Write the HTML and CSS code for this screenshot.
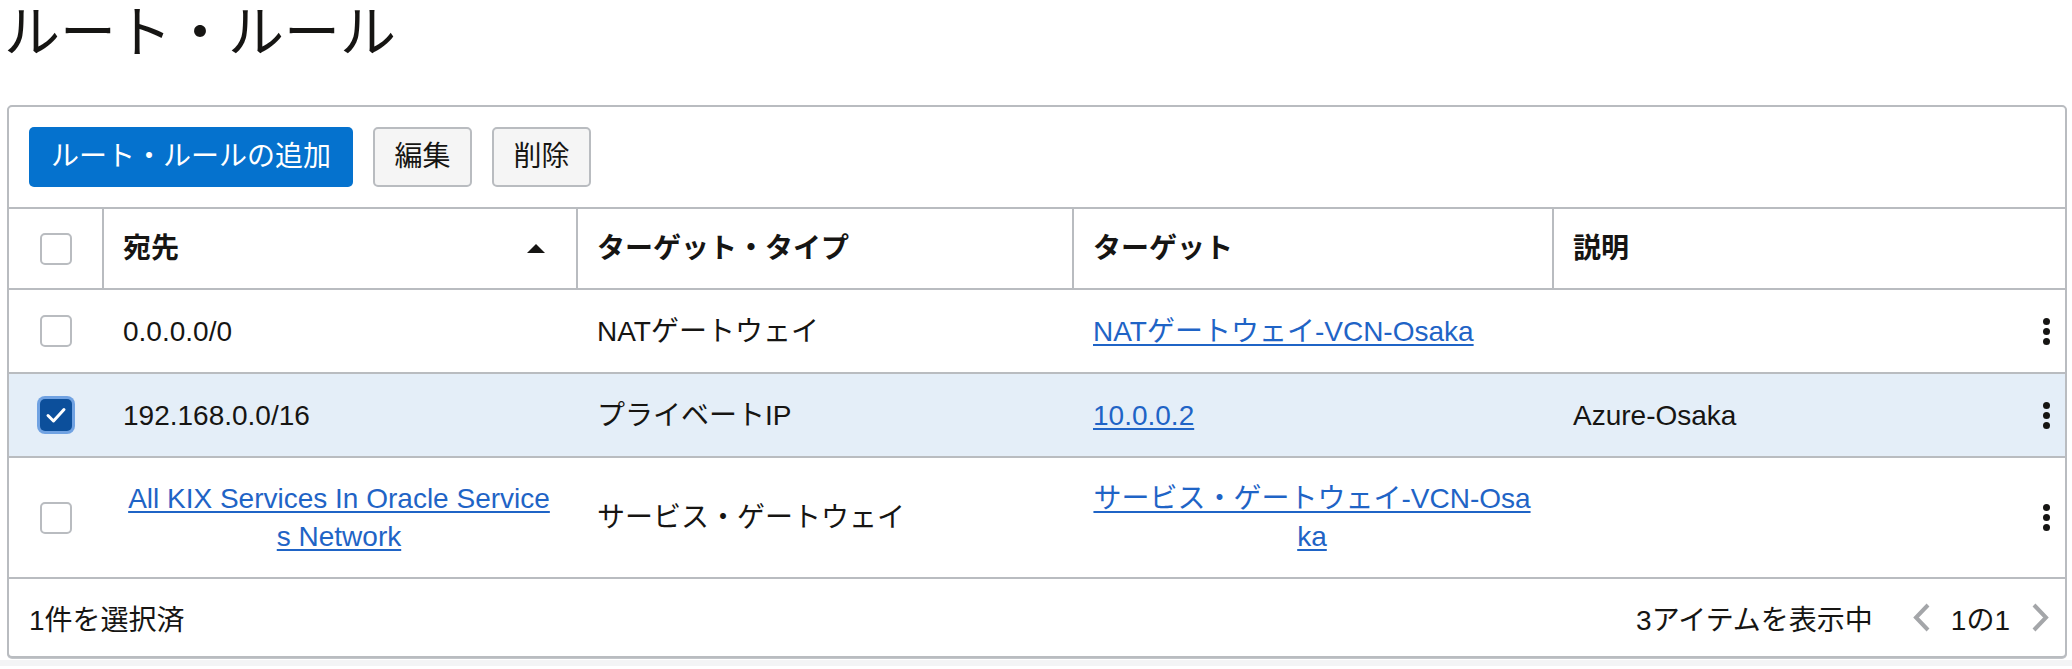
FILE: index.html
```html
<!DOCTYPE html>
<html lang="ja">
<head>
<meta charset="utf-8">
<title>ルート・ルール</title>
<link rel="stylesheet" href="styles.css">
</head>
<body>
<div class="page">
  <h1 class="title">ルート・ルール</h1>
  <section class="panel">
    <div class="toolbar">
      <button class="btn btn-primary">ルート・ルールの追加</button>
      <button class="btn btn-secondary">編集</button>
      <button class="btn btn-secondary">削除</button>
    </div>
    <div class="grid head">
      <div class="cell cell-check"><span class="checkbox"></span></div>
      <div class="cell hcell sortable"><span>宛先</span><span class="sort-up"></span></div>
      <div class="cell hcell">ターゲット・タイプ</div>
      <div class="cell hcell">ターゲット</div>
      <div class="cell hcell span2">説明</div>
    </div>
    <div class="grid row">
      <div class="cell cell-check"><span class="checkbox"></span></div>
      <div class="cell">0.0.0.0/0</div>
      <div class="cell">NATゲートウェイ</div>
      <div class="cell"><a href="#" class="link">NATゲートウェイ-VCN-Osaka</a></div>
      <div class="cell"></div>
      <div class="cell cell-kebab"><span class="kebab"><i></i><i></i><i></i></span></div>
    </div>
    <div class="grid row selected">
      <div class="cell cell-check"><span class="checkbox checked"><svg viewBox="0 0 32 32" width="32" height="32"><polyline points="8,16.5 13.5,22 24,10.5" fill="none" stroke="#fff" stroke-width="3" stroke-linecap="round" stroke-linejoin="round"/></svg></span></div>
      <div class="cell">192.168.0.0/16</div>
      <div class="cell">プライベートIP</div>
      <div class="cell"><a href="#" class="link">10.0.0.2</a></div>
      <div class="cell">Azure-Osaka</div>
      <div class="cell cell-kebab"><span class="kebab"><i></i><i></i><i></i></span></div>
    </div>
    <div class="grid row">
      <div class="cell cell-check"><span class="checkbox"></span></div>
      <div class="cell centered"><a href="#" class="link">All KIX Services In Oracle Service<br>s Network</a></div>
      <div class="cell">サービス・ゲートウェイ</div>
      <div class="cell centered"><a href="#" class="link">サービス・ゲートウェイ-VCN-Osa<br>ka</a></div>
      <div class="cell"></div>
      <div class="cell cell-kebab"><span class="kebab"><i></i><i></i><i></i></span></div>
    </div>
    <div class="footer">
      <span class="selected-count">1件を選択済</span>
      <div class="pager">
        <span class="pager-info">3アイテムを表示中</span>
        <svg class="chev" viewBox="0 0 17 29" width="17" height="29"><polyline points="15,2 3,14.5 15,27" fill="none" stroke="#a4a6a9" stroke-width="4"/></svg>
        <span class="pager-page">1の1</span>
        <svg class="chev" viewBox="0 0 17 29" width="17" height="29"><polyline points="2,2 14,14.5 2,27" fill="none" stroke="#a4a6a9" stroke-width="4"/></svg>
      </div>
    </div>
  </section>
  <div class="below"></div>
</div>
</body>
</html>
```

FILE: styles.css
```css
* { box-sizing: border-box; }

html, body {
  margin: 0;
  padding: 0;
  background: #ffffff;
}

body {
  font-family: "Liberation Sans", "Noto Sans CJK JP", sans-serif;
  font-size: 28px;
  color: #161513;
}

.page {
  padding: 0 5px 0 4px;
}

.title {
  margin: 0;
  height: 105px;
  padding-top: 1px;
  font-size: 56px;
  font-weight: 400;
  line-height: 64px;
  color: #161513;
}

.panel {
  margin-left: 3px;
  border: 2px solid #b9bcc0;
  border-radius: 5px;
  background: #fff;
  box-shadow: 0 1px 0 #c3c6ca;
}

.toolbar {
  display: flex;
  gap: 20px;
  padding: 20px;
}

.btn {
  font-family: inherit;
  font-size: 28px;
  height: 60px;
  border-radius: 5px;
  cursor: pointer;
  line-height: 1;
}

.btn-primary {
  background: #0572ce;
  color: #fff;
  border: none;
  padding: 0 22px;
}

.btn-secondary {
  background: #f5f5f5;
  color: #161513;
  border: 2px solid #b9bcc0;
  padding: 0 19.5px;
}

.grid {
  display: grid;
  grid-template-columns: 93px 474px 496px 480px 1fr 56px;
  border-top: 2px solid #b9bcc0;
}

.head {
  min-height: 81px;
  font-weight: 700;
}

.cell {
  display: flex;
  align-items: center;
  padding: 21.5px 21px;
  line-height: 39px;
  min-width: 0;
}

.head .cell {
  padding-top: 0;
  padding-bottom: 0;
}

.hcell {
  border-left: 2px solid #b9bcc0;
  padding-left: 19px;
}

.sortable {
  justify-content: space-between;
  padding-right: 31px;
}

.sort-up {
  width: 0;
  height: 0;
  border-left: 9.5px solid transparent;
  border-right: 9.5px solid transparent;
  border-bottom: 9px solid #161513;
}

.span2 {
  grid-column: span 2;
}

.cell-check {
  justify-content: center;
  padding: 0;
}

.checkbox {
  display: block;
  width: 32px;
  height: 32px;
  border: 2px solid #b9bcc0;
  border-radius: 5px;
  background: #fff;
}

.checkbox.checked {
  border: none;
  background: #0c4f9b;
  box-shadow: 0 0 0 3px #70a2e2;
}

.checkbox svg {
  display: block;
}

.row.selected {
  background: #e4eef8;
}

.centered {
  justify-content: center;
  text-align: center;
  padding-left: 20px;
  padding-right: 20px;
  line-height: 38px;
}

.link {
  color: #1f64c6;
  text-decoration: underline;
  text-decoration-thickness: 2px;
  text-underline-offset: 3px;
}

.cell-kebab {
  justify-content: flex-end;
  padding: 0 15px 0 0;
}

.kebab {
  display: flex;
  flex-direction: column;
  gap: 3px;
}

.kebab i {
  display: block;
  width: 7px;
  height: 7px;
  border-radius: 50%;
  background: #161513;
}

.footer {
  display: flex;
  align-items: center;
  justify-content: space-between;
  min-height: 79px;
  border-top: 2px solid #b9bcc0;
  padding: 0 16px 0 20px;
}

.pager {
  display: flex;
  align-items: center;
}

.pager-info {
  margin-right: 40px;
}

.pager-page {
  margin: 0 22px 0 21px;
}

.chev {
  display: block;
}

.below {
  height: 6px;
  margin: 2px -5px 0 -4px;
  background: #f3f4f5;
}
```
